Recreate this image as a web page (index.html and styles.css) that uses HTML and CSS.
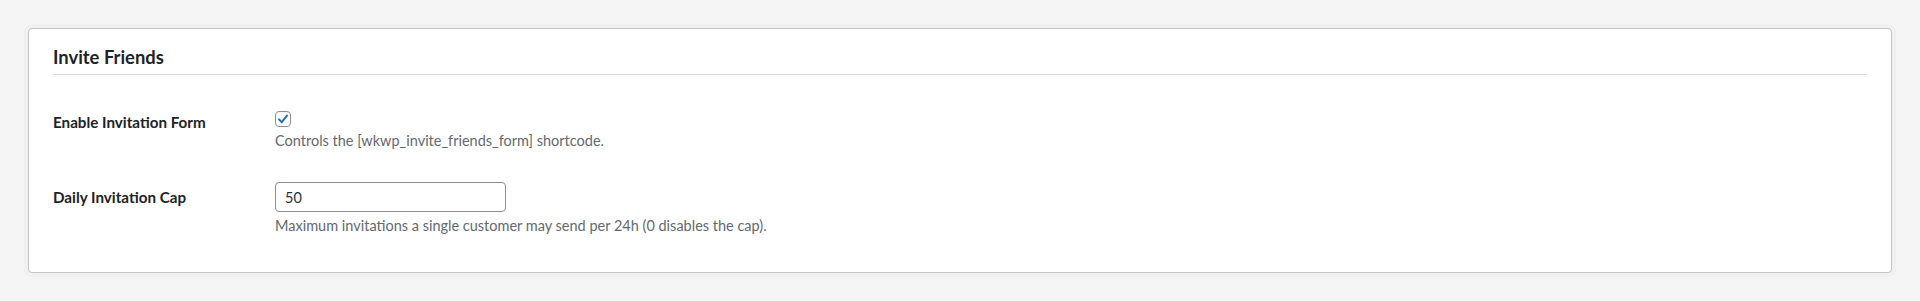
FILE: index.html
```html
<!DOCTYPE html>
<html lang="en">
<head>
<meta charset="utf-8">
<title>Invite Friends</title>
<link rel="stylesheet" href="styles.css">
</head>
<body>
<div class="page">
  <section class="card">
    <h2 class="card-title">Invite Friends</h2>
    <div class="form">
      <div class="row row-first">
        <div class="label">Enable Invitation Form</div>
        <div class="field">
          <span class="checkbox" role="checkbox" aria-checked="true">
            <svg width="14" height="14" viewBox="0 0 14 14"><path d="M3 7.4 L5.8 10.2 L11 3.6" fill="none" stroke="#2271b1" stroke-width="2" stroke-linecap="round" stroke-linejoin="round"/></svg>
          </span>
          <p class="desc desc-check">Controls the [wkwp_invite_friends_form] shortcode.</p>
        </div>
      </div>
      <div class="row row-second">
        <div class="label label-input">Daily Invitation Cap</div>
        <div class="field">
          <input class="text-input" type="text" value="50">
          <p class="desc desc-input">Maximum invitations a single customer may send per 24h (0 disables the cap).</p>
        </div>
      </div>
    </div>
  </section>
</div>
</body>
</html>
```

FILE: styles.css
```css
html, body {
  margin: 0;
  padding: 0;
}
body {
  background: #f5f5f6;
  font-family: Lato, "Open Sans", sans-serif;
  color: #1d2327;
}
.page {
  padding: 28px;
}
.card {
  background: #fff;
  border: 1px solid #c3c4c7;
  border-radius: 4px;
  padding: 0 24px 36px 24px;
  box-shadow: 0 0 0 4px #f0f0f1;
}
.card-title {
  margin: 0;
  padding: 16px 0 4px;
  font-size: 18.4px;
  line-height: 25px;
  font-weight: 700;
  color: #1d2327;
  border-bottom: 1px solid #dcdcde;
}
.row {
  display: grid;
  grid-template-columns: 222px 1fr;
}
.row-first {
  padding-top: 36px;
}
.row-second {
  padding-top: 31px;
}
.label {
  font-size: 15.2px;
  line-height: 20px;
  font-weight: 700;
  color: #1d2327;
  padding-top: 1px;
}
.label-input {
  padding-top: 5px;
}
.field {
  display: flex;
  flex-direction: column;
  align-items: flex-start;
}
.checkbox {
  box-sizing: border-box;
  width: 16px;
  height: 16px;
  border: 1px solid #8c8f94;
  border-radius: 4px;
  background: #fff;
  display: flex;
  align-items: center;
  justify-content: center;
}
.checkbox svg {
  display: block;
}
.desc {
  margin: 4px 0 0;
  font-size: 14.5px;
  line-height: 20px;
  color: #646970;
}
.text-input {
  box-sizing: border-box;
  width: 231px;
  height: 30px;
  margin: 0;
  padding: 0 9px;
  border: 1px solid #8c8f94;
  border-radius: 4px;
  background: #fff;
  font-family: Lato, "Open Sans", sans-serif;
  font-size: 14.5px;
  color: #2c3338;
  outline: none;
}
```
